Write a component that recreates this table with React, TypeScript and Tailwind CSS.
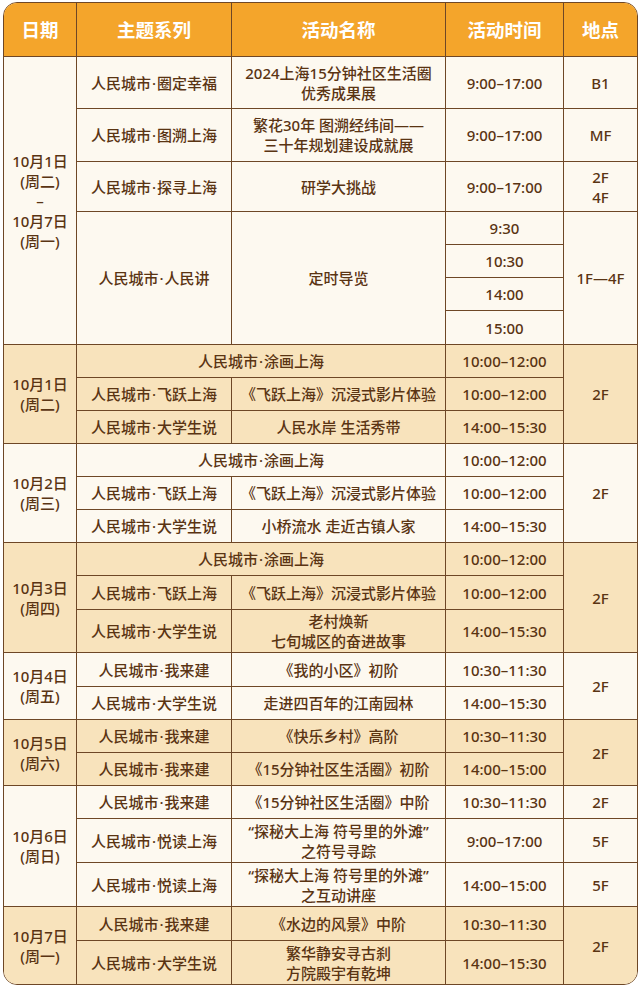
import type { ReactNode } from "react"

/* palette: header #F4A52B · cream #FDF9F0 · tan #F8E3BC · line #6E4726 · text #5A3413 */

type Tone = "cream" | "tan"

function C({
  children,
  rs,
  cs,
  tone,
  noR,
  noB,
}: {
  children?: ReactNode
  rs?: number
  cs?: number
  tone: Tone
  noR?: boolean
  noB?: boolean
}) {
  return (
    <td
      rowSpan={rs}
      colSpan={cs}
      className={[
        "p-0 text-center align-middle leading-[20px] border-[#6e4726]",
        tone === "tan" ? "bg-[#f8e3bc]" : "bg-[#fdf9f0]",
        noR ? "" : "border-r-[1.5px]",
        noB ? "" : "border-b-[1.5px]",
      ].join(" ")}
    >
      {children}
    </td>
  )
}

// theme name with the middle dot spaced a little, as in the poster
function T({ a, b }: { a: string; b: string }) {
  return (
    <>
      {a}
      <span className="mx-[1px]">·</span>
      {b}
    </>
  )
}

function Date({ d, w }: { d: string; w: string }) {
  return (
    <>
      {d}
      <br />({w})
    </>
  )
}

export default function App() {
  return (
    <div className="min-h-screen bg-white pl-[3px] pt-[2px] pr-[2px] font-['Noto_Sans','Noto_Sans_CJK_SC',sans-serif] text-[15px] font-medium text-[#5a3413]">
      <div className="w-[635px] overflow-hidden rounded-[14px] border-[1.5px] border-[#6e4726]">
        <table className="w-full table-fixed border-separate border-spacing-0">
          <colgroup>
            <col className="w-[73px]" />
            <col className="w-[155px]" />
            <col className="w-[214px]" />
            <col className="w-[118px]" />
            <col />
          </colgroup>
          <thead>
            <tr className="h-[54px] bg-[#f4a52b] text-[18.5px] font-bold text-white">
              <th className="border-b-[1.5px] border-r-[1.5px] border-[#6e4726] font-bold">日期</th>
              <th className="border-b-[1.5px] border-r-[1.5px] border-[#6e4726] font-bold">主题系列</th>
              <th className="border-b-[1.5px] border-r-[1.5px] border-[#6e4726] font-bold">活动名称</th>
              <th className="border-b-[1.5px] border-r-[1.5px] border-[#6e4726] font-bold">活动时间</th>
              <th className="border-b-[1.5px] border-[#6e4726] font-bold">地点</th>
            </tr>
          </thead>
          <tbody>
            {/* 10.1 – 10.7 */}
            <tr className="h-[52px]">
              <C tone="cream" rs={7}>
                10月1日
                <br />
                (周二)
                <br />–<br />
                10月7日
                <br />
                (周一)
              </C>
              <C tone="cream"><T a="人民城市" b="圈定幸福" /></C>
              <C tone="cream">
                2024上海15分钟社区生活圈
                <br />
                优秀成果展
              </C>
              <C tone="cream">9:00–17:00</C>
              <C tone="cream" noR>B1</C>
            </tr>
            <tr className="h-[53px]">
              <C tone="cream"><T a="人民城市" b="图溯上海" /></C>
              <C tone="cream">
                繁花30年 图溯经纬间——
                <br />
                三十年规划建设成就展
              </C>
              <C tone="cream">9:00–17:00</C>
              <C tone="cream" noR>MF</C>
            </tr>
            <tr className="h-[50px]">
              <C tone="cream"><T a="人民城市" b="探寻上海" /></C>
              <C tone="cream">研学大挑战</C>
              <C tone="cream">9:00–17:00</C>
              <C tone="cream" noR>
                2F
                <br />
                4F
              </C>
            </tr>
            <tr className="h-[33px]">
              <C tone="cream" rs={4}><T a="人民城市" b="人民讲" /></C>
              <C tone="cream" rs={4}>定时导览</C>
              <C tone="cream">9:30</C>
              <C tone="cream" rs={4} noR>1F—4F</C>
            </tr>
            <tr className="h-[33px]">
              <C tone="cream">10:30</C>
            </tr>
            <tr className="h-[33px]">
              <C tone="cream">14:00</C>
            </tr>
            <tr className="h-[34px]">
              <C tone="cream">15:00</C>
            </tr>

            {/* 10.1 */}
            <tr className="h-[33px]">
              <C tone="tan" rs={3}>
                <Date d="10月1日" w="周二" />
              </C>
              <C tone="tan" cs={2}><T a="人民城市" b="涂画上海" /></C>
              <C tone="tan">10:00–12:00</C>
              <C tone="tan" rs={3} noR>2F</C>
            </tr>
            <tr className="h-[33px]">
              <C tone="tan"><T a="人民城市" b="飞跃上海" /></C>
              <C tone="tan">《飞跃上海》沉浸式影片体验</C>
              <C tone="tan">10:00–12:00</C>
            </tr>
            <tr className="h-[33px]">
              <C tone="tan"><T a="人民城市" b="大学生说" /></C>
              <C tone="tan">人民水岸 生活秀带</C>
              <C tone="tan">14:00–15:30</C>
            </tr>

            {/* 10.2 */}
            <tr className="h-[33px]">
              <C tone="cream" rs={3}>
                <Date d="10月2日" w="周三" />
              </C>
              <C tone="cream" cs={2}><T a="人民城市" b="涂画上海" /></C>
              <C tone="cream">10:00–12:00</C>
              <C tone="cream" rs={3} noR>2F</C>
            </tr>
            <tr className="h-[33px]">
              <C tone="cream"><T a="人民城市" b="飞跃上海" /></C>
              <C tone="cream">《飞跃上海》沉浸式影片体验</C>
              <C tone="cream">10:00–12:00</C>
            </tr>
            <tr className="h-[33px]">
              <C tone="cream"><T a="人民城市" b="大学生说" /></C>
              <C tone="cream">小桥流水 走近古镇人家</C>
              <C tone="cream">14:00–15:30</C>
            </tr>

            {/* 10.3 */}
            <tr className="h-[33px]">
              <C tone="tan" rs={3}>
                <Date d="10月3日" w="周四" />
              </C>
              <C tone="tan" cs={2}><T a="人民城市" b="涂画上海" /></C>
              <C tone="tan">10:00–12:00</C>
              <C tone="tan" rs={3} noR>2F</C>
            </tr>
            <tr className="h-[34px]">
              <C tone="tan"><T a="人民城市" b="飞跃上海" /></C>
              <C tone="tan">《飞跃上海》沉浸式影片体验</C>
              <C tone="tan">10:00–12:00</C>
            </tr>
            <tr className="h-[43px]">
              <C tone="tan"><T a="人民城市" b="大学生说" /></C>
              <C tone="tan">
                老村焕新
                <br />
                七旬城区的奋进故事
              </C>
              <C tone="tan">14:00–15:30</C>
            </tr>

            {/* 10.4 */}
            <tr className="h-[34px]">
              <C tone="cream" rs={2}>
                <Date d="10月4日" w="周五" />
              </C>
              <C tone="cream"><T a="人民城市" b="我来建" /></C>
              <C tone="cream">《我的小区》初阶</C>
              <C tone="cream">10:30–11:30</C>
              <C tone="cream" rs={2} noR>2F</C>
            </tr>
            <tr className="h-[33px]">
              <C tone="cream"><T a="人民城市" b="大学生说" /></C>
              <C tone="cream">走进四百年的江南园林</C>
              <C tone="cream">14:00–15:30</C>
            </tr>

            {/* 10.5 */}
            <tr className="h-[33px]">
              <C tone="tan" rs={2}>
                <Date d="10月5日" w="周六" />
              </C>
              <C tone="tan"><T a="人民城市" b="我来建" /></C>
              <C tone="tan">《快乐乡村》高阶</C>
              <C tone="tan">10:30–11:30</C>
              <C tone="tan" rs={2} noR>2F</C>
            </tr>
            <tr className="h-[33px]">
              <C tone="tan"><T a="人民城市" b="我来建" /></C>
              <C tone="tan">《15分钟社区生活圈》初阶</C>
              <C tone="tan">14:00–15:00</C>
            </tr>

            {/* 10.6 */}
            <tr className="h-[33px]">
              <C tone="cream" rs={3}>
                <Date d="10月6日" w="周日" />
              </C>
              <C tone="cream"><T a="人民城市" b="我来建" /></C>
              <C tone="cream">《15分钟社区生活圈》中阶</C>
              <C tone="cream">10:30–11:30</C>
              <C tone="cream" noR>2F</C>
            </tr>
            <tr className="h-[44px]">
              <C tone="cream"><T a="人民城市" b="悦读上海" /></C>
              <C tone="cream">
                “探秘大上海 符号里的外滩”
                <br />
                之符号寻踪
              </C>
              <C tone="cream">9:00–17:00</C>
              <C tone="cream" noR>5F</C>
            </tr>
            <tr className="h-[44px]">
              <C tone="cream"><T a="人民城市" b="悦读上海" /></C>
              <C tone="cream">
                “探秘大上海 符号里的外滩”
                <br />
                之互动讲座
              </C>
              <C tone="cream">14:00–15:00</C>
              <C tone="cream" noR>5F</C>
            </tr>

            {/* 10.7 */}
            <tr className="h-[34px]">
              <C tone="tan" rs={2} noB>
                <Date d="10月7日" w="周一" />
              </C>
              <C tone="tan"><T a="人民城市" b="我来建" /></C>
              <C tone="tan">《水边的风景》中阶</C>
              <C tone="tan">10:30–11:30</C>
              <C tone="tan" rs={2} noR noB>2F</C>
            </tr>
            <tr className="h-[43px]">
              <C tone="tan" noB><T a="人民城市" b="大学生说" /></C>
              <C tone="tan" noB>
                繁华静安寻古刹
                <br />
                方院殿宇有乾坤
              </C>
              <C tone="tan" noB>14:00–15:30</C>
            </tr>
          </tbody>
        </table>
      </div>
    </div>
  )
}
